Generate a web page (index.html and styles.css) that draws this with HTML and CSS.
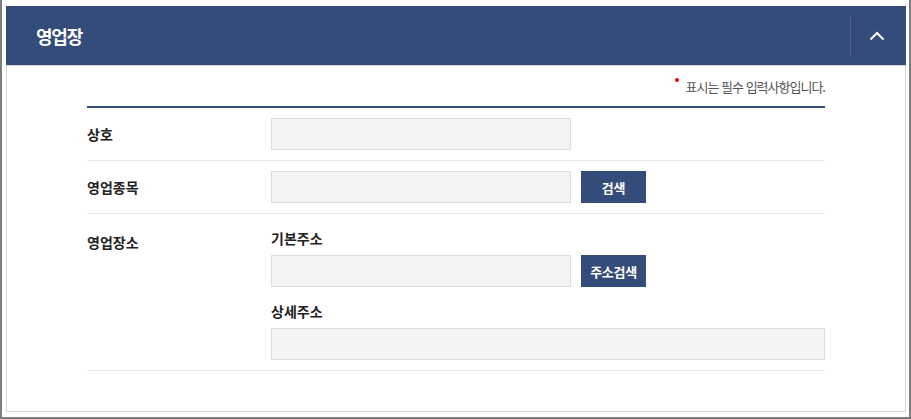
FILE: index.html
```html
<!DOCTYPE html>
<html lang="ko">
<head>
<meta charset="utf-8">
<title>영업장</title>
<link rel="stylesheet" href="styles.css">
</head>
<body>
<div class="frame">
  <section class="panel">
    <header class="panel-head">
      <h2 class="panel-title">영업장</h2>
      <button class="toggle" type="button" aria-label="접기">
        <svg width="16" height="10" viewBox="0 0 16 10"><path d="M1.5 8.5 L8 2 L14.5 8.5" fill="none" stroke="#fff" stroke-width="2"/></svg>
      </button>
    </header>
    <div class="panel-body">
      <div class="content">
        <p class="note"><span class="dot"></span>표시는 필수 입력사항입니다.</p>
        <div class="form">
          <div class="row">
            <div class="label">상호</div>
            <div class="field"><input class="input" type="text"></div>
          </div>
          <div class="row">
            <div class="label">영업종목</div>
            <div class="field"><input class="input" type="text"><button class="btn" type="button">검색</button></div>
          </div>
          <div class="row row-top">
            <div class="label label-top">영업장소</div>
            <div class="field field-col">
              <div class="sublabel">기본주소</div>
              <div class="inline"><input class="input" type="text"><button class="btn" type="button">주소검색</button></div>
              <div class="sublabel sublabel-2">상세주소</div>
              <input class="input input-wide" type="text">
            </div>
          </div>
        </div>
      </div>
    </div>
  </section>
</div>
</body>
</html>
```

FILE: styles.css
```css
html, body {
  margin: 0;
  padding: 0;
  background: #fff;
}
body {
  font-family: "Noto Sans CJK KR", "Noto Sans", sans-serif;
  color: #222;
}
.frame {
  width: 911px;
  height: 419px;
  box-sizing: border-box;
  border-left: 2px solid #7d7d7d;
  border-right: 2px solid #7d7d7d;
  border-bottom: 2px solid #7d7d7d;
  padding: 6px 3px 5px 4px;
}
.panel {
  display: flex;
  flex-direction: column;
  height: 100%;
}
.panel-head {
  height: 59px;
  background: #344c79;
  display: flex;
  align-items: center;
  justify-content: space-between;
  flex-shrink: 0;
}
.panel-title {
  margin: 0 0 0 30px;
  color: #fff;
  font-size: 18px;
  font-weight: 700;
  letter-spacing: -1.2px;
  line-height: 24px;
}
.toggle {
  height: 40px;
  width: 56px;
  border: 0;
  border-left: 1px solid #4a6190;
  background: transparent;
  padding: 0;
  display: flex;
  align-items: center;
  justify-content: center;
}
.toggle svg {
  display: block;
  margin-left: -4px;
}
.panel-body {
  flex: 1;
  border: 1px solid #d6d6d6;
  padding: 0 80px;
}
.content {
  display: flex;
  flex-direction: column;
}
.note {
  margin: 0;
  height: 40px;
  display: flex;
  align-items: center;
  justify-content: flex-end;
  font-size: 13px;
  letter-spacing: -1px;
  color: #555;
  line-height: 18px;
  padding-top: 2px;
  box-sizing: border-box;
}
.dot {
  width: 4px;
  height: 4px;
  border-radius: 50%;
  background: #e8000b;
  margin-right: 7px;
  align-self: flex-start;
  margin-top: 10px;
}
.form {
  border-top: 2px solid #344c79;
}
.row {
  display: flex;
  align-items: center;
  padding: 10px 0;
  border-bottom: 1px solid #e8e8e8;
}
.row-top {
  align-items: flex-start;
}
.label {
  width: 184px;
  flex-shrink: 0;
  font-size: 14px;
  font-weight: 700;
  letter-spacing: 0;
  line-height: 20px;
  color: #222;
}
.label-top {
  padding-top: 8px;
}
.field {
  display: flex;
  align-items: center;
  gap: 10px;
  flex: 1;
}
.field-col {
  flex-direction: column;
  align-items: stretch;
  gap: 0;
}
.inline {
  display: flex;
  gap: 10px;
}
.sublabel {
  font-size: 14px;
  font-weight: 700;
  letter-spacing: 0;
  line-height: 20px;
  padding-top: 4px;
  margin-bottom: 7px;
  color: #222;
}
.sublabel-2 {
  padding-top: 0;
  margin-top: 14px;
}
.input {
  width: 300px;
  height: 32px;
  box-sizing: border-box;
  border: 1px solid #dcdcdc;
  background: #f4f4f4;
  margin: 0;
  padding: 0 8px;
  font: inherit;
}
.input-wide {
  width: 100%;
}
.btn {
  width: 65px;
  height: 32px;
  border: 0;
  background: #344c79;
  color: #fff;
  font-family: "Noto Sans CJK KR", "Noto Sans", sans-serif;
  font-size: 13px;
  font-weight: 700;
  letter-spacing: -0.3px;
  padding: 0;
  margin: 0;
}
```
